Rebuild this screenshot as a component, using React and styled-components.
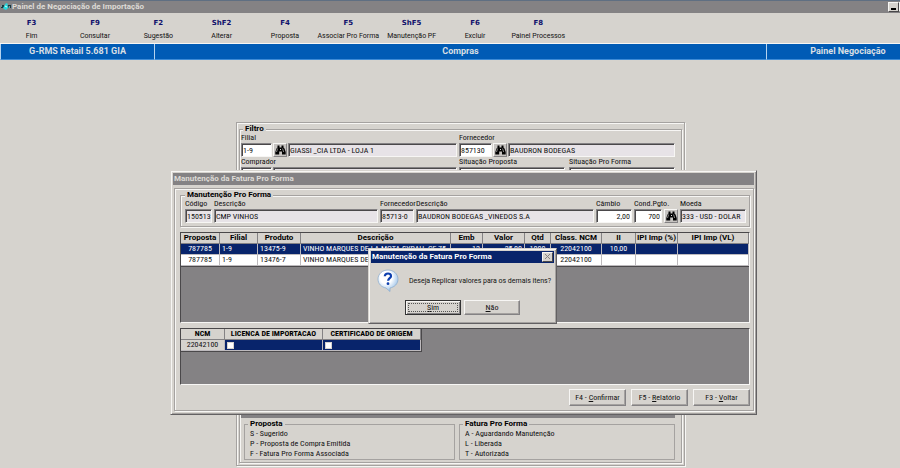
import React from 'react';
import styled, { createGlobalStyle, css } from 'styled-components';

const c = {
  face: '#d6d3ce',
  shade: '#848284',
  dark: '#4a484a',
  mid: '#a5a2a0',
  light: '#f7f6f4',
  navy: '#08246b',
  blue: '#005bb5',
  readOnly: '#e7e3e7',
};
const condensed = '"Roboto Condensed", "Liberation Sans", sans-serif';
const sans = 'Roboto, "Liberation Sans", sans-serif';

const Global = createGlobalStyle`
  *, *::before, *::after { box-sizing: border-box; }
  body { margin: 0; background: ${c.face}; overflow: hidden; }
`;

const Desktop = styled.div`
  position: relative;
  min-height: 100vh;
  background: ${c.face};
  color: #111;
  font: 8px/10px ${condensed};
`;

const TitleBar = styled.header`
  display: flex;
  align-items: center;
  height: ${p => (p.$app ? 13 : 12)}px;
  padding: ${p => (p.$app ? '0' : '0 1px')};
  overflow: hidden;
  background: ${p => (p.$active ? c.navy : c.shade)};
  color: ${p => (p.$active ? '#fff' : '#dedbd6')};
  border-top: ${p => (p.$app ? '1px solid #5f6f82' : '0')};
  font: bold 8px/10px ${sans};
  white-space: nowrap;
`;
const Title = styled.h1`
  flex: 1;
  margin: 0;
  font: inherit;
`;
const WindowButton = styled.button`
  display: flex;
  flex: none;
  align-items: flex-end;
  justify-content: center;
  width: 11px;
  height: 10px;
  padding: 1px;
  border: 1px solid;
  border-color: ${c.light} ${c.dark} ${c.dark} ${c.light};
  background: ${c.face};
  color: ${p => (p.$muted ? c.shade : '#000')};
`;
const CutOff = styled.div`
  display: flex;
  width: 12px;
`;

const Toolbar = styled.nav`
  display: grid;
  grid-template-columns: repeat(9, 1fr);
  max-width: 570px;
  padding: 5px 0 1px;
`;
const ToolButton = styled.button`
  display: flex;
  flex-direction: column;
  align-items: center;
  gap: 2px;
  padding: 0;
  border: 0;
  background: none;
  color: #111;
  font: 7px/11px ${sans};
  white-space: nowrap;
`;
const Key = styled.b`
  color: #10106b;
  font: bold 7px/11px "DejaVu Sans", sans-serif;
`;

const Banner = styled.div`
  display: grid;
  grid-template-columns: 154px 1fr 134px;
  height: 17px;
  border: solid ${c.light};
  border-width: 1px 0;
  background: ${c.blue};
`;
const BannerCell = styled.div`
  padding-left: ${p => (p.$shift ? 29 : 0)}px;
  border: 1px solid #3d8bd6;
  border-width: 0 0 1px 1px;
  border-left-color: #b5d3ef;
  color: #d9dfe4;
  font: bold 9px/15px ${sans};
  text-align: center;
  white-space: nowrap;
`;

const etched = css`
  border: 1px solid ${c.mid};
  box-shadow: inset 1px 1px 0 ${c.light}, 1px 1px 0 ${c.light};
`;
const Page = styled.main`
  display: flex;
  justify-content: center;
  padding: 62px 0 4px 21px;
`;
const Panel = styled.section`
  flex: 0 1 449px;
  padding: 2px;
  ${etched}
`;
const Group = styled.fieldset`
  min-width: 0;
  margin: 0;
  padding: ${p => p.$pad};
  ${p => (p.$flat ? css`border: 1px solid ${c.mid};` : etched)}
`;
const Legend = styled.legend`
  margin-left: ${p => p.$indent || 0}px;
  padding: 0 2px;
  background: ${c.face};
  color: #000;
  font: bold 8px/8px ${sans};
`;
const FilterRow = styled.div`
  display: grid;
  grid-template-columns: 1fr 1fr;
  gap: ${p => p.$gap || 2}px;
`;
const FieldLine = styled.div`
  display: flex;
  align-items: flex-end;
  gap: ${p => p.$gap || 1}px;
`;
const FieldBox = styled.label`
  display: flex;
  flex: ${p => (p.$w ? `0 0 ${p.$w}px` : '1 1 0')};
  flex-direction: column;
  min-width: 0;
  white-space: nowrap;
`;
const box = css`
  width: 100%;
  min-width: 0;
  height: 14px;
  margin: 0;
  padding: 0 0 0 1px;
  border: 1px solid;
  border-color: ${c.shade} ${c.light} ${c.light} ${c.shade};
  border-radius: 0;
  box-shadow: inset 1px 1px 0 ${c.dark};
  color: #111;
  font: 8px/10px ${condensed};
`;
const Input = styled.input`
  ${box}
  padding-right: ${p => (p.$right ? 1 : 0)}px;
  background: ${p => (p.readOnly ? c.readOnly : '#fff')};
  text-align: ${p => (p.$right ? 'right' : 'left')};
  outline: 0;
`;
const Select = styled.select`
  ${box}
  background: #fff;
`;
const IconButton = styled.button`
  display: flex;
  flex: none;
  align-items: center;
  justify-content: center;
  width: 14px;
  height: 14px;
  padding: 0;
  border: 1px solid;
  border-color: ${c.light} ${c.shade} ${c.shade} ${c.light};
  background: #c6c3c0;
`;
const Results = styled.div`
  height: 233px;
  margin-top: 4px;
  border: 1px solid ${c.shade};
  background: ${c.shade};
`;
const Codes = styled.ul`
  margin: 0;
  padding: 0 3px;
  list-style: none;
`;
const LegendRow = styled.div`
  display: grid;
  grid-template-columns: 211fr 216fr;
  gap: 4px;
  padding: 2px 0 0 3px;
`;

const Window = styled.section`
  position: absolute;
  border: 1px solid;
  border-color: ${c.face} #636163 #636163 ${c.face};
  box-shadow: inset 1px 1px 0 ${c.light}, inset -1px -1px 0 ${c.mid};
  background: ${c.face};
`;
const MainWindow = styled(Window)`
  top: 170px;
  right: 143px;
  left: 170px;
  padding: 2px;
`;
const MessageWindow = styled(Window)`
  top: 248px;
  left: 368px;
  min-width: 189px;
  padding: 2px;
`;
const WindowBody = styled.div`
  margin: 3px 0 1px 1px;
  padding: 2px 3px 4px 5px;
  ${etched}
`;
const GridFrame = styled.div`
  height: ${p => p.$h}px;
  margin-top: 5px;
  overflow: hidden;
  border: 1px solid;
  border-color: ${c.dark} ${c.light} ${c.light} ${c.dark};
  background: ${c.shade};
`;
const Table = styled.table`
  width: ${p => (p.$w ? `${p.$w}px` : '100%')};
  table-layout: fixed;
  border-collapse: separate;
  border-spacing: 0;
  border-bottom: 1px solid ${c.dark};
  border-right: ${p => (p.$w ? `1px solid ${c.dark}` : 0)};
`;
const Th = styled.th`
  height: 11px;
  padding: 0;
  overflow: hidden;
  border: solid ${c.shade};
  border-width: 0 1px 1px 0;
  background: ${c.face};
  color: #000;
  font: bold 8px/10px ${p => (p.$narrow ? condensed : sans)};
  white-space: nowrap;
`;
const Td = styled.td`
  height: 11px;
  padding: 0 2px;
  overflow: hidden;
  border: solid #bdbabd;
  border-width: 0 1px 1px 0;
  background: ${p => (p.$head ? c.face : p.$on ? c.navy : '#fff')};
  color: ${p => (p.$on ? '#fff' : '#111')};
  font: 8px/10px ${condensed};
  text-align: ${p => p.$align || 'left'};
  white-space: pre;
`;
const Check = styled.input`
  display: block;
  width: 7px;
  height: 7px;
  margin: 0;
  appearance: none;
  border: 1px solid #d6d3ce;
  background: #fff;
`;
const Actions = styled.footer`
  display: flex;
  justify-content: ${p => (p.$center ? 'center' : 'flex-end')};
  gap: ${p => (p.$center ? 3 : 5)}px;
  padding: ${p => (p.$center ? '8px 0 6px' : '4px 0 0')};
`;
const Button = styled.button`
  width: ${p => (p.$small ? 56 : 57)}px;
  height: ${p => (p.$small ? 15 : 17)}px;
  padding: 0;
  border: 1px solid;
  border-color: ${c.light} ${c.shade} ${c.shade} ${c.light};
  box-shadow: inset -1px -1px 0 ${c.mid};
  background: ${c.face};
  color: #111;
  font: 8px/10px ${condensed};
  ${p => p.$default && css`
    border-color: #333;
    box-shadow: inset 1px 1px 0 ${c.light}, inset -1px -1px 0 ${c.shade};
    outline: 1px dotted #555;
    outline-offset: -4px;
  `}
`;
const Message = styled.div`
  display: flex;
  align-items: center;
  gap: 10px;
  padding: 6px 2px 0 6px;
`;
const MessageText = styled.p`
  margin: 0;
  font: 7px/10px ${sans};
  white-space: nowrap;
`;

const Binoculars = () => (
  <svg width="11" height="10" viewBox="0 0 11 10" aria-hidden="true">
    <path d="M2.5 0.5h2v2h2v-2h2v2l1 1 1.2 3.5v2.5H7V6.5H4.2v3H.3V7l1.2-3.500 1-1z" fill="#000" />
    <path d="M2.600 3.500 1.500 7M7.600 3.500 8.600 7" stroke="#a7a5a4" strokeWidth=".8" />
    <path d="M5 4h1v1H5z" fill="#ddd" />
  </svg>
);
const AppLogo = () => (
  <svg width="12" height="12" viewBox="0 0 12 12" aria-hidden="true">
    <path d="M1 4h3v3H1zM8 4h3v3H8z" fill="#173940" />
    <path d="M3 7 6 2l2 1-1 2 2 1-3 3-2-1z" fill="#25d8de" />
    <path d="M1 5h1M5 5l2 1M9 6h1" stroke="#d9fbfa" strokeWidth="1" />
  </svg>
);
const Question = () => (
  <svg width="22" height="23" viewBox="0 0 22 23" aria-hidden="true">
    <defs>
      <radialGradient id="bubble" cx="40%" cy="35%" r="65%">
        <stop offset="0.450" stopColor="#fff" />
        <stop offset="1" stopColor="#9fc4e9" />
      </radialGradient>
    </defs>
    <path d="M11 1C5.500 1 1 5 1 10s3.500 8 8 9l4 3.500V19c4.500-1 8-4 8-9s-4.500-9-10-9z" fill="url(#bubble)" stroke="#88a9cb" strokeWidth=".7" />
    <path d="M7.800 7.300C8 3.500 14.200 3.600 14 7.200c-.1 2-2.800 2.100-2.900 4.600" fill="none" stroke="#0d3fae" strokeWidth="2.200" />
    <circle cx="11" cy="14.700" r="1.400" fill="#0d3fae" />
  </svg>
);

const Field = ({ label, w, ...rest }) => (
  <FieldBox $w={w}>
    {label && <span>{label}</span>}
    <Input {...rest} />
  </FieldBox>
);
const Search = ({ name }) => (
  <IconButton type="button" aria-label={name}><Binoculars /></IconButton>
);

const tools = [
  ['F3', 'Fim'], ['F9', 'Consultar'], ['F2', 'Sugestão'], ['ShF2', 'Alterar'], ['F4', 'Proposta'],
  ['F5', 'Associar Pro Forma'], ['ShF5', 'Manutenção PF'], ['F6', 'Excluir'], ['F8', 'Painel Processos'],
];
const columns = [
  ['Proposta', 39, 'center'], ['Filial', 38], ['Produto', 43], ['Descrição', 150], ['Emb', 32, 'right'],
  ['Valor', 42, 'right'], ['Qtd', 26, 'center'], ['Class. NCM', 51, 'center'], ['II', 34, 'center'],
  ['IPI Imp (%)', 42], ['IPI Imp (VL)'],
];
const items = [
  ['787785', '1-9', '13475-9', 'VINHO MARQUES DE LA MOTA SYRAH  CF 75', '12', '25,00', '1000', '22042100', '10,00', '', ''],
  ['787785', '1-9', '13476-7', 'VINHO MARQUES DE', '', '', '', '22042100', '', '', ''],
];

export default function App() {
  return (
    <Desktop>
      <Global />
      <TitleBar $app>
        <AppLogo />
        <Title>Painel de Negociação de Importação</Title>
        <CutOff>
          <WindowButton type="button" aria-label="Minimizar">
            <svg width="5" height="2" viewBox="0 0 5 2"><path d="M0 0h5v2H0z" /></svg>
          </WindowButton>
          <WindowButton type="button" aria-label="Maximizar" />
        </CutOff>
      </TitleBar>
      <Toolbar>
        {tools.map(([key, name]) => (
          <ToolButton type="button" key={key}><Key>{key}</Key>{name}</ToolButton>
        ))}
      </Toolbar>
      <Banner>
        <BannerCell>G-RMS Retail 5.681 GIA</BannerCell>
        <BannerCell>Compras</BannerCell>
        <BannerCell $shift>Painel Negociação</BannerCell>
      </Banner>

      <Page>
        <Panel>
          <Group $pad="0 6px 2px 1px">
            <Legend $indent={2}>Filtro</Legend>
            <FilterRow>
              <FieldLine>
                <Field label="Filial" w={31} defaultValue="1-9" />
                <Search name="Buscar filial" />
                <Field aria-label="Nome da filial" readOnly value="GIASSI _CIA LTDA - LOJA 1" />
              </FieldLine>
              <FieldLine>
                <Field label="Fornecedor" w={33} defaultValue="857130" />
                <Search name="Buscar fornecedor" />
                <Field aria-label="Nome do fornecedor" readOnly value="BAUDRON BODEGAS" />
              </FieldLine>
            </FilterRow>
            <FilterRow>
              <FieldLine>
                <Field label="Comprador" w={31} />
                <Field aria-label="Nome do comprador" readOnly />
              </FieldLine>
              <FilterRow $gap={4}>
                <FieldBox>Situação Proposta<Select /></FieldBox>
                <FieldBox>Situação Pro Forma<Select /></FieldBox>
              </FilterRow>
            </FilterRow>
            <Results />
            <LegendRow>
              <Group $flat $pad="1px 2px 0">
                <Legend $indent={1}>Proposta</Legend>
                <Codes>
                  <li>S - Sugerido</li>
                  <li>P - Proposta de Compra Emitida</li>
                  <li>F - Fatura Pro Forma Associada</li>
                </Codes>
              </Group>
              <Group $flat $pad="1px 2px 0">
                <Legend $indent={1}>Fatura Pro Forma</Legend>
                <Codes>
                  <li>A - Aguardando Manutenção</li>
                  <li>L - Liberada</li>
                  <li>T - Autorizada</li>
                </Codes>
              </Group>
            </LegendRow>
          </Group>
        </Panel>
      </Page>

      <MainWindow>
        <TitleBar><Title>Manutenção da Fatura Pro Forma</Title></TitleBar>
        <WindowBody>
          <Group $pad="0 3px 3px 4px">
            <Legend>Manutenção Pro Forma</Legend>
            <FieldLine $gap={2}>
              <Field label="Código" w={27} readOnly value="150513" />
              <Field label="Descrição" readOnly value="CMP VINHOS" />
              <Field label="Fornecedor" w={34} readOnly value="85713-0" />
              <Field label="Descrição" w={178} readOnly value="BAUDRON BODEGAS _VINEDOS S.A" />
              <Field label="Câmbio" w={36} $right defaultValue="2,00" />
              <Field label="Cond.Pgto." w={28} $right defaultValue="700" />
              <Search name="Buscar condição" />
              <Field label="Moeda" w={66} readOnly value="333 - USD - DOLAR" />
            </FieldLine>
          </Group>
          <GridFrame $h={91}>
            <Table>
              <colgroup>{columns.map(([n, w]) => <col key={n} width={w} />)}</colgroup>
              <thead><tr>{columns.map(([n]) => <Th key={n}>{n}</Th>)}</tr></thead>
              <tbody>
                {items.map((row, r) => (
                  <tr key={row[2]}>
                    {row.map((v, i) => <Td key={columns[i][0]} $on={r === 0} $align={columns[i][2]}>{v}</Td>)}
                  </tr>
                ))}
              </tbody>
            </Table>
          </GridFrame>
          <GridFrame $h={57}>
            <Table $w={241}>
              <colgroup><col width="44" /><col width="98" /><col width="98" /></colgroup>
              <thead>
                <tr><Th $narrow>NCM</Th><Th $narrow>LICENCA DE IMPORTACAO</Th><Th $narrow>CERTIFICADO DE ORIGEM</Th></tr>
              </thead>
              <tbody>
                <tr>
                  <Td $head $align="center">22042100</Td>
                  <Td $on><Check type="checkbox" aria-label="Licença de importação" /></Td>
                  <Td $on><Check type="checkbox" aria-label="Certificado de origem" /></Td>
                </tr>
              </tbody>
            </Table>
          </GridFrame>
          <Actions>
            <Button type="button">F4 - <u>C</u>onfirmar</Button>
            <Button type="button">F5 - <u>R</u>elatório</Button>
            <Button type="button">F3 - <u>V</u>oltar</Button>
          </Actions>
        </WindowBody>
      </MainWindow>

      <MessageWindow role="dialog" aria-label="Manutenção da Fatura Pro Forma">
        <TitleBar $active>
          <Title>Manutenção da Fatura Pro Forma</Title>
          <WindowButton type="button" aria-label="Fechar" $muted>
            <svg width="7" height="7" viewBox="0 0 7 7"><path d="m1 1 5 5M6 1 1 6" stroke="currentColor" /></svg>
          </WindowButton>
        </TitleBar>
        <Message>
          <Question />
          <MessageText>Deseja Replicar valores para os demais itens?</MessageText>
        </Message>
        <Actions $center>
          <Button type="button" $small $default><u>S</u>im</Button>
          <Button type="button" $small><u>N</u>ão</Button>
        </Actions>
      </MessageWindow>
    </Desktop>
  );
}
